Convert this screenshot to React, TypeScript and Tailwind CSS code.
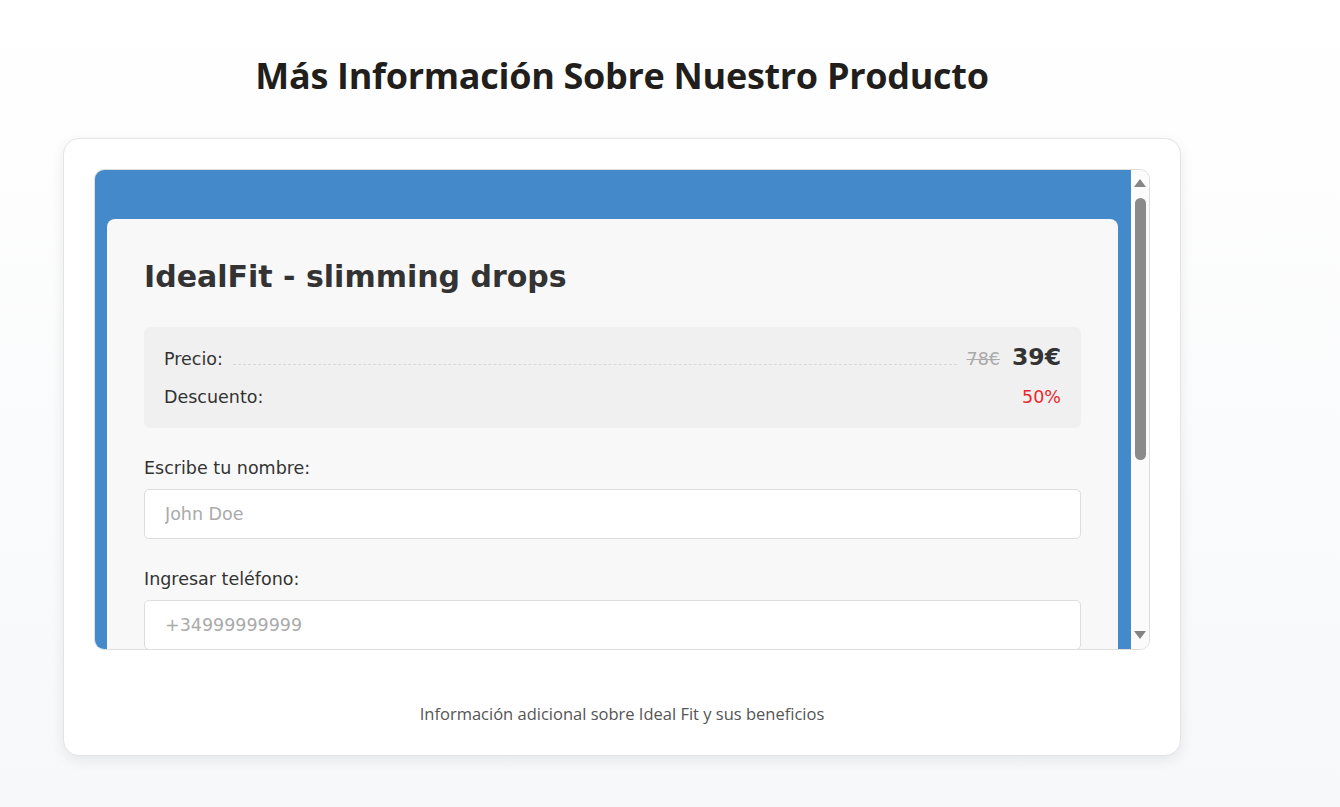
export default function App() {
  return (
    <div className="min-h-screen bg-gradient-to-b from-white to-[#f7f8fa] font-['Open_Sans',sans-serif]">
      <div className="w-[1244px] pt-[53px] pb-10">
        <h1 className="text-center text-[36px] leading-[46px] font-bold tracking-[-0.3px] text-[#221e1b]">
          Más Información Sobre Nuestro Producto
        </h1>

        {/* card */}
        <div className="mx-auto mt-[39px] w-[1118px] rounded-2xl border border-[#e4e4e4] bg-white px-[30px] pt-[30px] pb-[29px] shadow-[0_4px_14px_rgba(0,0,0,0.08)]">
          {/* embedded form frame */}
          <div className="flex h-[481px] overflow-hidden rounded-[10px] border border-[#dedede]">
            <div className="flex-1 overflow-hidden bg-[#4489c9] pt-[49px] pl-3 pr-[13px] font-['DejaVu_Sans',Verdana,sans-serif] text-[#333]">
              <div className="rounded-t-lg bg-[#f8f8f8] px-[37px] pt-10 pb-10">
                <h2 className="text-[30px] leading-[36px] font-bold text-[#333]">IdealFit - slimming drops</h2>

                <div className="mt-8 flex flex-col gap-2 rounded-md bg-[#f0f0f0] px-5 pt-[15px] pb-4 text-[17.5px]">
                  <div className="flex items-baseline leading-[30px]">
                    <span>Precio:</span>
                    <div className="mx-2.5 h-0 flex-1 border-b border-dashed border-[#d8d8d8]" />
                    <span className="text-[#aaa] line-through">78€</span>
                    <span className="ml-3 text-[23.5px] font-bold text-[#333]">39€</span>
                  </div>
                  <div className="flex items-baseline justify-between leading-[30px]">
                    <span>Descuento:</span>
                    <span className="text-[#e8292c]">50%</span>
                  </div>
                </div>

                <label className="mt-[30px] mb-[11px] block text-[17.5px] leading-5">Escribe tu nombre:</label>
                <input
                  readOnly
                  placeholder="John Doe"
                  className="block h-[50px] w-full rounded-[5px] border border-[#dddddd] bg-white px-5 text-[17.5px] placeholder:text-[#aaa] outline-none"
                />

                <label className="mt-[30px] mb-[11px] block text-[17.5px] leading-5">Ingresar teléfono:</label>
                <input
                  readOnly
                  placeholder="+34999999999"
                  className="block h-[50px] w-full rounded-[5px] border border-[#dddddd] bg-white px-5 text-[17.5px] placeholder:text-[#aaa] outline-none"
                />
              </div>
            </div>

            {/* scrollbar */}
            <div className="flex w-[18px] flex-col items-center bg-[#fbfbfb] pt-[9px] pb-[10px]">
              <svg width="12" height="8" viewBox="0 0 12 8">
                <path d="M6 0 L12 8 L0 8 Z" fill="#858585" />
              </svg>
              <div className="mt-[11px] h-[262px] w-[11px] rounded-full bg-[#8a8a8a]" />
              <div className="flex-1" />
              <svg width="12" height="8" viewBox="0 0 12 8">
                <path d="M0 0 L12 0 L6 8 Z" fill="#858585" />
              </svg>
            </div>
          </div>

          <p className="mt-[52px] text-center text-[16.5px] leading-6 text-[#555]">
            Información adicional sobre Ideal Fit y sus beneficios
          </p>
        </div>
      </div>
    </div>
  );
}
